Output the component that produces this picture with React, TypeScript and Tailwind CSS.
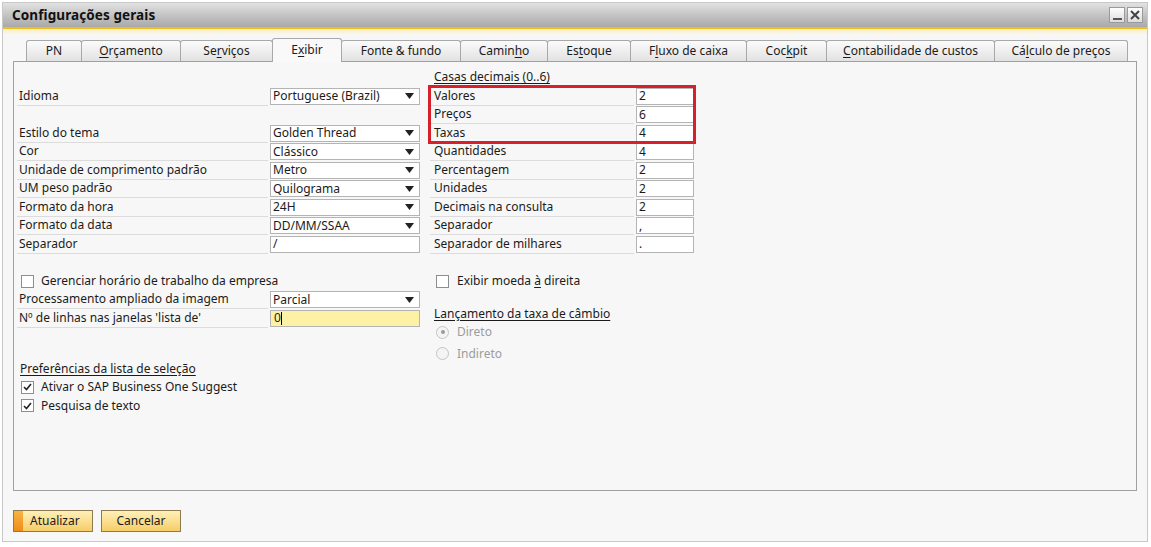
import React from 'react';

const font = { fontFamily: '"Noto Sans", "Open Sans", sans-serif' };

const tabs = [
  { label: 'PN', w: 56 },
  { label: 'Orçamento', w: 100, u: 0 },
  { label: 'Serviços', w: 93, u: 2 },
  { label: 'Exibir', w: 70, u: 1, active: true },
  { label: 'Fonte & fundo', w: 120 },
  { label: 'Caminho', w: 88, u: 5 },
  { label: 'Estoque', w: 84, u: 2 },
  { label: 'Fluxo de caixa', w: 117, u: 1 },
  { label: 'Cockpit', w: 81, u: 3 },
  { label: 'Contabilidade de custos', w: 169, u: 0 },
  { label: 'Cálculo de preços', w: 134, u: 2 },
];

const leftRows: ([string, string, 'select' | 'text'] | null)[] = [
  ['Idioma', 'Portuguese (Brazil)', 'select'],
  null,
  ['Estilo do tema', 'Golden Thread', 'select'],
  ['Cor', 'Clássico', 'select'],
  ['Unidade de comprimento padrão', 'Metro', 'select'],
  ['UM peso padrão', 'Quilograma', 'select'],
  ['Formato da hora', '24H', 'select'],
  ['Formato da data', 'DD/MM/SSAA', 'select'],
  ['Separador', '/', 'text'],
];

const decimals = [
  ['Quantidades', '4'],
  ['Percentagem', '2'],
  ['Unidades', '2'],
  ['Decimais na consulta', '2'],
  ['Separador', ','],
  ['Separador de milhares', '.'],
];

function Mnemonic({ text, u }: { text: string; u?: number }) {
  if (u === undefined) return <>{text}</>;
  return (
    <>
      {text.slice(0, u)}
      <span className="underline underline-offset-2">{text[u]}</span>
      {text.slice(u + 1)}
    </>
  );
}

function Select({ value, yellow }: { value: string; yellow?: boolean }) {
  return (
    <div
      className={`w-[150px] h-[17px] border border-[#b4b4b4] flex items-center justify-between pl-[2px] pr-[5px] ${
        yellow ? 'bg-[#fdf1a6]' : 'bg-white'
      }`}
    >
      <span>{value}</span>
      {!yellow && (
        <svg width="9" height="6" viewBox="0 0 9 6">
          <path d="M0 0h9L4.5 6z" fill="#222" />
        </svg>
      )}
    </div>
  );
}

function LeftRow({ label, value, kind }: { label: string; value: string; kind: string }) {
  return (
    <div className="h-[18.5px] flex items-center">
      <div className="w-[251px] h-full flex items-center pl-[2px] border-b border-[#dcdcdc]">{label}</div>
      <div className="ml-[2px]">
        {kind === 'select' ? (
          <Select value={value} />
        ) : (
          <div className="w-[150px] h-[17px] border border-[#b4b4b4] bg-white flex items-center pl-[2px]">{value}</div>
        )}
      </div>
    </div>
  );
}

function RightRow({ label, value }: { label: string; value: string }) {
  return (
    <div className="h-[18.5px] flex items-center">
      <div className="w-[204px] h-full flex items-center pl-[4px] border-b border-[#dcdcdc]">{label}</div>
      <div className="ml-[2px] w-[58px] h-[17px] border border-[#b4b4b4] bg-white flex items-center pl-[2px]">{value}</div>
    </div>
  );
}

function Check({ checked }: { checked?: boolean }) {
  return (
    <div className="w-[13px] h-[13px] border border-[#8e8e8e] bg-white flex items-center justify-center">
      {checked && (
        <svg width="9" height="8" viewBox="0 0 9 8">
          <path d="M1 4l2.5 2.5L8 1" stroke="#222" strokeWidth="1.6" fill="none" />
        </svg>
      )}
    </div>
  );
}

function Radio({ on }: { on?: boolean }) {
  return (
    <div className="w-[13px] h-[13px] rounded-full border border-[#c4c4c4] bg-[#f4f4f4] flex items-center justify-center">
      {on && <div className="w-[4px] h-[4px] rounded-full bg-[#9a9a9a]" />}
    </div>
  );
}

function Button({ label, focus }: { label: string; focus?: boolean }) {
  return (
    <div className="w-[80px] h-[22px] border border-[#8c7b52] bg-gradient-to-b from-[#fff0b8] to-[#f6cd66] flex items-center relative">
      {focus && <div className="absolute left-0 top-0 bottom-0 w-[9px] bg-gradient-to-b from-[#f7b443] to-[#ee8c12]" />}
      <span className={focus ? 'ml-[16px] relative' : 'mx-auto'}>{label}</span>
    </div>
  );
}

export default function App() {
  return (
    <div className="w-[1151px] h-[547px] bg-white text-[12px] text-[#1b1b1b] pt-[2px] pl-[2px]" style={font}>
      <div className="w-[1146px] h-[540px] border border-[#c8c8c8] bg-[#f7f7f7] flex flex-col">
        {/* Title bar */}
        <div className="h-[24px] bg-gradient-to-b from-[#e2e2e2] via-[#c4c4c4] to-[#a9a9a9] flex items-center justify-between pl-[9px] pr-[4px]">
          <span className="text-[13.5px] font-bold text-[#111] tracking-[0.1px]">Configurações gerais</span>
          <div className="flex gap-[2px]">
            <div className="w-[16px] h-[16px] border border-[#9a9a9a] bg-gradient-to-b from-white to-[#dcdcdc] flex items-end justify-center pb-[2px]">
              <div className="w-[9px] h-[2px] bg-[#555]" />
            </div>
            <div className="w-[16px] h-[16px] border border-[#9a9a9a] bg-gradient-to-b from-white to-[#dcdcdc] flex items-center justify-center">
              <svg width="10" height="10" viewBox="0 0 10 10">
                <path d="M1 1l8 8M9 1l-8 8" stroke="#444" strokeWidth="2" />
              </svg>
            </div>
          </div>
        </div>
        <div className="h-[2px] bg-[#efbd1e]" />
        <div className="h-[6px] bg-gradient-to-b from-[#fbeec0] to-[#f7f7f7]" />

        {/* Tabs */}
        <div className="flex items-end ml-[23px] mt-[2px] h-[24px]">
          {tabs.map((t, i) => (
            <div
              key={t.label}
              style={{ width: t.w }}
              className={`flex items-center justify-center border border-[#a8a8a8] border-b-0 rounded-t-[3px] ${
                i > 0 ? '-ml-px' : ''
              } ${
                t.active
                  ? 'h-[24px] bg-[#f9f9f9] relative z-10 -mb-px pb-[1px]'
                  : 'h-[21px] bg-gradient-to-b from-[#fbfbfb] to-[#e2e2e2]'
              }`}
            >
              <span>
                <Mnemonic text={t.label} u={t.u} />
              </span>
            </div>
          ))}
        </div>

        {/* Panel */}
        <div className="ml-[10px] w-[1124px] h-[430px] border border-[#a0a0a0] bg-[#f7f7f7] flex pl-[3px]">
          {/* Left column */}
          <div className="flex flex-col w-[403px]">
            <div className="h-[25px]" />
            {leftRows.map((r, i) =>
              r ? <LeftRow key={i} label={r[0]} value={r[1]} kind={r[2]} /> : <div key={i} className="h-[18.5px]" />
            )}
            <div className="h-[18.5px]" />
            <div className="h-[18.5px] flex items-center pl-[4px] gap-[7px]">
              <Check />
              <span>Gerenciar horário de trabalho da empresa</span>
            </div>
            <LeftRow label="Processamento ampliado da imagem" value="Parcial" kind="select" />
            <div className="h-[18.5px] flex items-center">
              <div className="w-[251px] h-full flex items-center pl-[2px] border-b border-[#dcdcdc]">Nº de linhas nas janelas 'lista de'</div>
              <div className="ml-[2px] w-[150px] h-[17px] border border-[#b4b4b4] bg-[#fdf1a6] flex items-center pl-[3px]">
                0<span className="w-px h-[13px] bg-black" />
              </div>
            </div>
            <div className="h-[32px]" />
            <div className="h-[18.5px] flex items-center pl-[3px]">
              <span className="underline underline-offset-2">Preferências da lista de seleção</span>
            </div>
            <div className="h-[18.5px] flex items-center pl-[4px] gap-[7px]">
              <Check checked />
              <span>Ativar o SAP Business One Suggest</span>
            </div>
            <div className="h-[18.5px] flex items-center pl-[4px] gap-[7px]">
              <Check checked />
              <span>Pesquisa de texto</span>
            </div>
          </div>

          {/* Right column */}
          <div className="ml-[10px] flex flex-col w-[270px]">
            <div className="h-[5px]" />
            <div className="h-[19px] flex items-center pl-[4px]">
              <span className="underline underline-offset-2">Casas decimais (0..6)</span>
            </div>
            <div className="h-[1px]" />
            <div className="relative w-[264px]">
              <RightRow label="Valores" value="2" />
              <RightRow label="Preços" value="6" />
              <RightRow label="Taxas" value="4" />
              <div className="absolute -left-[2px] -top-[2px] w-[268px] h-[59px] border-[3px] border-[#d6202c]" />
            </div>
            {decimals.map(([l, v]) => (
              <RightRow key={l} label={l} value={v} />
            ))}
            <div className="h-[18.5px]" />
            <div className="h-[18.5px] flex items-center pl-[6px] gap-[8px]">
              <Check />
              <span>
                Exibir moeda <span className="underline underline-offset-2">à</span> direita
              </span>
            </div>
            <div className="h-[14px]" />
            <div className="h-[18.5px] flex items-center pl-[4px]">
              <span className="underline underline-offset-2">Lançamento da taxa de câmbio</span>
            </div>
            <div className="h-[18.5px] flex items-center pl-[6px] gap-[8px] text-[#9c9c9c]">
              <Radio on />
              <span>Direto</span>
            </div>
            <div className="h-[3px]" />
            <div className="h-[18.5px] flex items-center pl-[6px] gap-[8px] text-[#9c9c9c]">
              <Radio />
              <span>Indireto</span>
            </div>
          </div>
        </div>

        {/* Buttons */}
        <div className="flex gap-[8px] ml-[10px] mt-[19px]">
          <Button label="Atualizar" focus />
          <Button label="Cancelar" />
        </div>
      </div>
    </div>
  );
}
